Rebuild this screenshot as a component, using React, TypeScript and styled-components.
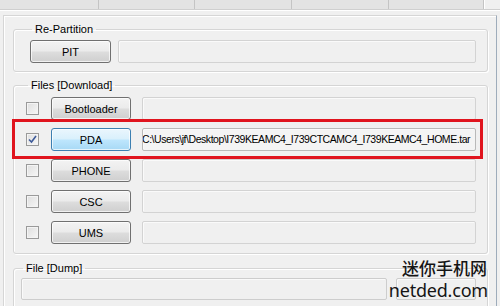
import React from "react";
import styled, { createGlobalStyle, css } from "styled-components";

//------------------------------------------------------

const GlobalStyle = createGlobalStyle`
  html, body {
    margin: 0;
    padding: 0;
    background: #f0f0f0;
  }
`;

const Window = styled.div`
  position: relative;
  width: 500px;
  height: 306px;
  overflow: hidden;
  background: #f0f0f0;
  font-family: "Liberation Sans", Arial, sans-serif;
  font-size: 11px;
  color: #000;
`;

const TabStrip = styled.div`
  display: flex;
  height: 9px;
  border-bottom: 1px solid #cfcfcf;
  box-shadow: 0 1px 0 #fff;
`;

const TabCell = styled.div<{ w: number }>`
  width: ${p => p.w}px;
  flex: none;
  background: #e3e3e3;
  border-right: 1px solid #c4c4c4;
  box-shadow: 1px 0 0 #fff;
`;

const Panel = styled.div`
  margin: 5px 0 0 3px;
  width: 494px;
  height: 300px;
  border-left: 1px solid #d6d6d6;
  border-top: 1px solid #d6d6d6;
  border-right: 1px solid #9eacbb;
  box-shadow: inset 1px 1px 0 #fff;
  padding: 7px 0 0 9px;
  box-sizing: border-box;
`;

const Group = styled.fieldset<{ gap?: number; pad: string; w: number }>`
  margin: ${p => p.gap || 0}px 0 0 0;
  padding: ${p => p.pad};
  width: ${p => p.w}px;
  box-sizing: border-box;
  border: 1px solid #d5d5d5;
  border-radius: 3px;
  box-shadow: inset 1px 1px 0 #fff, 1px 1px 0 #fff;
  min-width: 0;
`;

const Legend = styled.legend`
  padding: 0 3px;
  margin-left: 2px;
  line-height: 13px;
  font-size: 11px;
  color: #000;
`;

const Row = styled.div<{ highlighted?: boolean }>`
  position: relative;
  display: flex;
  align-items: center;
  height: 23px;
  & + & {
    margin-top: 8px;
  }
  ${p =>
    p.highlighted &&
    css`
      &::after {
        content: "";
        position: absolute;
        left: -14px;
        right: -7px;
        top: -9px;
        bottom: -8px;
        border: 3px solid #e0141e;
        pointer-events: none;
      }
    `}
`;

const Button = styled.div<{ active?: boolean; w: number }>`
  width: ${p => p.w}px;
  height: 23px;
  box-sizing: border-box;
  flex: none;
  display: flex;
  align-items: center;
  justify-content: center;
  border: 1px solid #707070;
  border-radius: 3px;
  background: linear-gradient(#f3f3f3 0%, #ebebeb 48%, #dddddd 52%, #cfcfcf 100%);
  box-shadow: inset 0 0 0 1px rgba(255, 255, 255, 0.7);
  ${p =>
    p.active &&
    css`
      border-color: #3c7fb1;
      background: linear-gradient(#eaf6fd 0%, #d9f0fc 48%, #bee6fd 52%, #a7d9f5 100%);
    `}
`;

const Field = styled.div<{ ml: number; filled?: boolean }>`
  margin-left: ${p => p.ml}px;
  flex: 1;
  height: 23px;
  box-sizing: border-box;
  border: 1px solid #d3d3d3;
  border-radius: 2px;
  background: #f0f0f0;
  box-shadow: inset 1px 1px 0 #fafafa;
  overflow: hidden;
  white-space: nowrap;
  line-height: 21px;
  padding-left: 1px;
  ${p =>
    p.filled &&
    css`
      border-color: #b9b9b9;
      background: #f4f4f4;
      text-indent: -2px;
      font-size: 10.5px;
      letter-spacing: -0.45px;
    `}
`;

const Check = styled.div`
  width: 13px;
  height: 13px;
  box-sizing: border-box;
  flex: none;
  margin-right: 12px;
  border: 1px solid #9a9a9a;
  background: linear-gradient(135deg, #dedede, #f7f7f7);
  box-shadow: inset 0 0 0 1px #f4f4f4;
  display: flex;
  align-items: center;
  justify-content: center;
`;

const DumpRow = styled.div`
  display: flex;
  height: 22px;
`;

const DumpBox = styled.div<{ w: number; ml?: number }>`
  width: ${p => p.w}px;
  margin-left: ${p => p.ml || 0}px;
  box-sizing: border-box;
  border: 1px solid #cdcdcd;
  border-radius: 2px;
  background: #f0f0f0;
  box-shadow: inset 1px 1px 0 #fafafa;
`;

const Watermark = styled.div`
  position: absolute;
  right: 12px;
  bottom: 5px;
  display: flex;
  flex-direction: column;
  align-items: flex-end;
  color: #151515;
  font-family: "Noto Sans", "Noto Sans CJK SC", sans-serif;
  line-height: 22px;
`;

const WatermarkCn = styled.div`
  font-family: "Noto Sans CJK SC", sans-serif;
  font-size: 17px;
  font-weight: 500;
  margin-right: 1px;
`;

const WatermarkEn = styled.div`
  font-size: 18px;
  letter-spacing: -0.2px;
`;

//------------------------------------------------------

const files = [
  { name: "Bootloader" },
  { name: "PDA", checked: true, path: "C:\\Users\\jf\\Desktop\\I739KEAMC4_I739CTCAMC4_I739KEAMC4_HOME.tar" },
  { name: "PHONE" },
  { name: "CSC" },
  { name: "UMS" }
];

const CheckMark = () => (
  <svg width="9" height="9" viewBox="0 0 9 9">
    <path d="M1 4.5 L3.5 7 L8 1" fill="none" stroke="#3d5a99" strokeWidth="1.6" />
  </svg>
);

export default function App() {
  return (
    <Window>
      <GlobalStyle />
      <TabStrip>
        <TabCell w={98} />
        <TabCell w={95} />
        <TabCell w={96} />
        <TabCell w={96} />
        <TabCell w={94} />
      </TabStrip>
      <Panel>
        <Group w={475} pad="4px 11px 8px 16px">
          <Legend>Re-Partition</Legend>
          <Row>
            <Button w={81}>PIT</Button>
            <Field ml={7} />
          </Row>
        </Group>
        <Group gap={7} w={475} pad="5px 11px 9px 12px">
          <Legend>Files [Download]</Legend>
          {files.map(f => (
            <Row key={f.name} highlighted={f.checked}>
              <Check>{f.checked && <CheckMark />}</Check>
              <Button w={80} active={f.checked}>{f.name}</Button>
              <Field ml={11} filled={!!f.path}>{f.path}</Field>
            </Row>
          ))}
        </Group>
        <Group gap={8} w={475} pad="3px 11px 8px 7px">
          <Legend>File [Dump]</Legend>
          <DumpRow>
            <DumpBox w={368} />
            <DumpBox w={80} ml={9} />
          </DumpRow>
        </Group>
      </Panel>
      <Watermark>
        <WatermarkCn>迷你手机网</WatermarkCn>
        <WatermarkEn>netded.com</WatermarkEn>
      </Watermark>
    </Window>
  );
}
